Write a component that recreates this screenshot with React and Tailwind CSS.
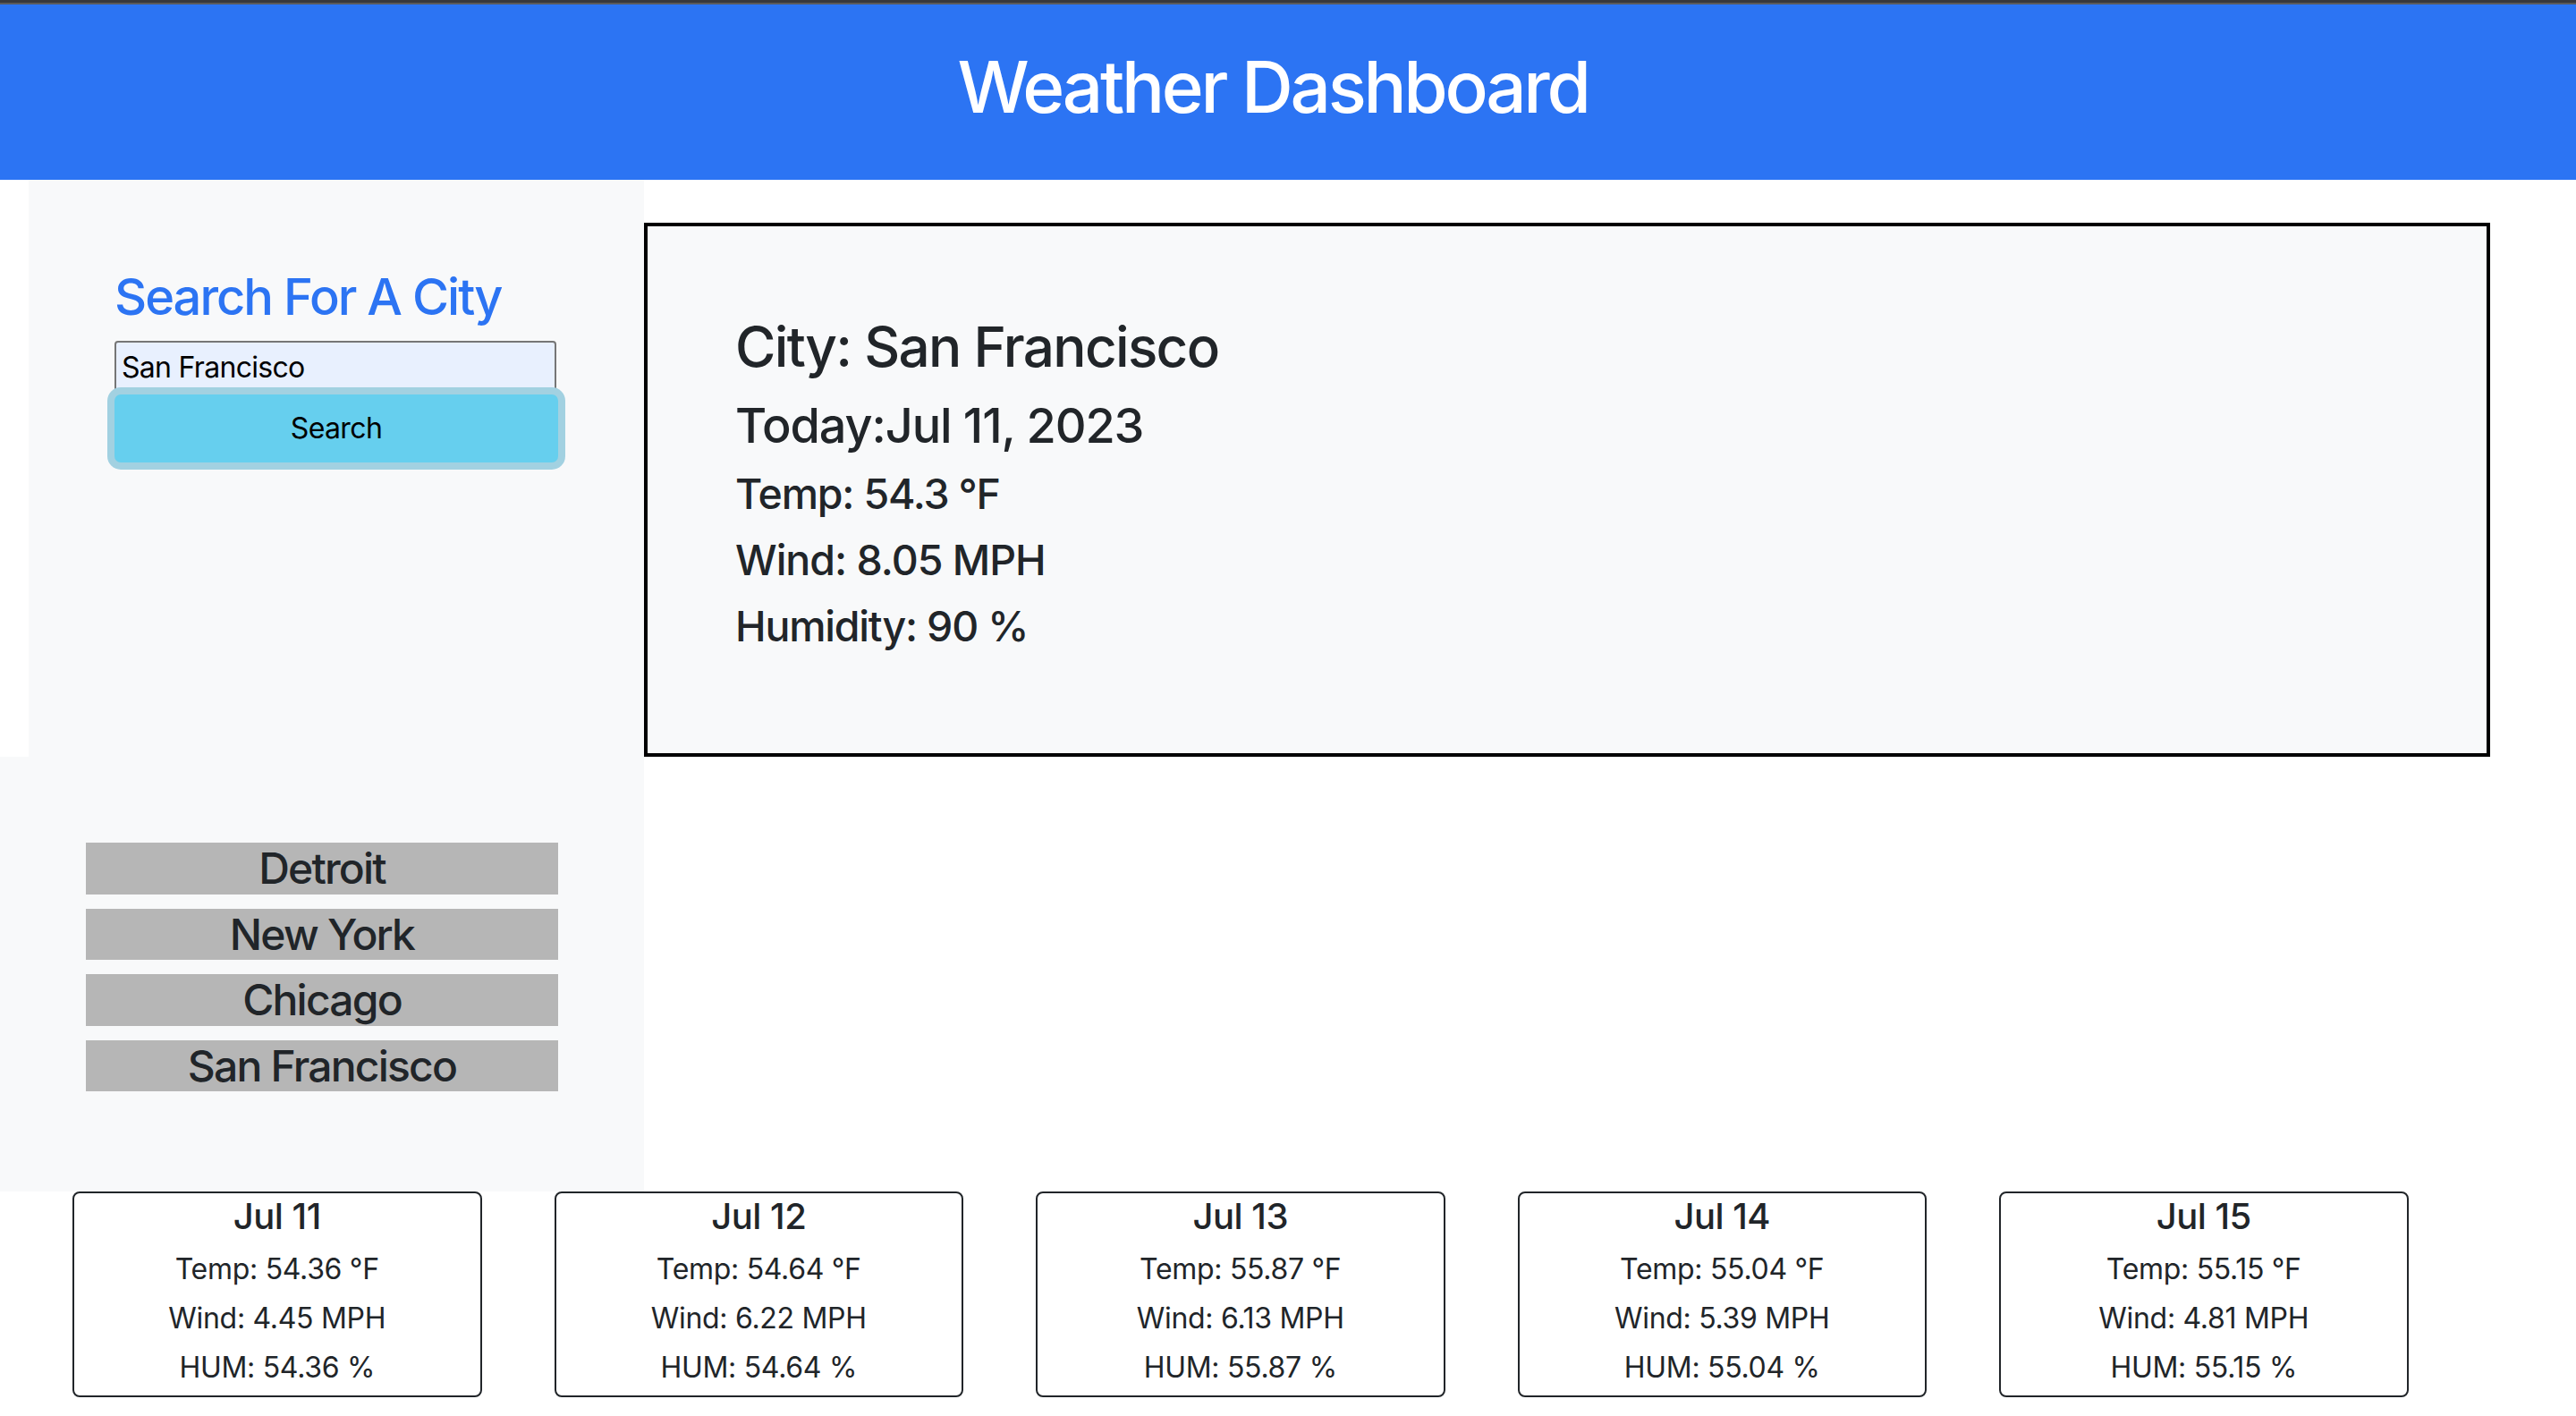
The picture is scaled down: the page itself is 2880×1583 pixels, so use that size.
import React from "react";

const CITIES = ["Detroit", "New York", "Chicago", "San Francisco"];

const FORECAST = [
    { date: "Jul 11", temp: "54.36", wind: "4.45", hum: "54.36" },
    { date: "Jul 12", temp: "54.64", wind: "6.22", hum: "54.64" },
    { date: "Jul 13", temp: "55.87", wind: "6.13", hum: "55.87" },
    { date: "Jul 14", temp: "55.04", wind: "5.39", hum: "55.04" },
    { date: "Jul 15", temp: "55.15", wind: "4.81", hum: "55.15" },
];

function Header() {
    return (
        <header className="h-[201px] flex flex-col">
            <div className="h-[3px] bg-[#38383c]"></div>
            <div className="h-[2px] bg-[#5a5a5c]"></div>
            <div className="flex-1 bg-[#2c74f3] flex items-center justify-center pb-[12px] pr-[34px]">
                <h1 className="text-white text-[80px] leading-[96px] font-medium tracking-[-3.3px]">Weather Dashboard</h1>
            </div>
        </header>
    );
}

function SearchPanel() {
    return (
        <aside className="ml-[32px] w-[688px] shrink-0 bg-[#f8f9fa] px-[96px] pt-[98px]">
            <h3 className="text-[56px] leading-[67px] font-medium text-[#2c74f3] mb-[15px] whitespace-nowrap tracking-[-2px]">Search For A City</h3>
            <input
                defaultValue="San Francisco"
                className="block w-[494px] h-[59px] bg-[#e8f0fe] border-2 border-[#767676] rounded-[4px] px-[6px] text-[32px] text-black outline-none tracking-[-0.7px]"
            />
            <button className="block w-[496px] h-[76px] mt-[1px] bg-[#66cfee] rounded-[7px] text-[32px] text-black tracking-[-0.6px] shadow-[0_0_0_8px_#a2d1e1]">Search</button>
        </aside>
    );
}

function CurrentWeather() {
    return (
        <main className="mt-[48px] w-[2064px] h-[597px] shrink-0 border-4 border-black bg-[#f8f9fa] pl-[98px] pt-[87px] text-[#212529] font-medium">
            <h2 className="text-[62px] leading-[96px] tracking-[-1.7px]">City: San Francisco</h2>
            <h3 className="text-[54px] leading-[79px] tracking-[-1.1px]">Today:Jul 11, 2023</h3>
            <h4 className="text-[46.5px] leading-[74px] tracking-[-1.2px]">Temp: 54.3 °F</h4>
            <h4 className="text-[46.5px] leading-[74px] tracking-[-1px]">Wind: 8.05 MPH</h4>
            <h4 className="text-[46.5px] leading-[74px] tracking-[-1.2px]">Humidity: 90 %</h4>
        </main>
    );
}

function History() {
    return (
        <section className="w-[720px] bg-[#f8f9fa] px-[96px] pt-[96px] pb-[112px] flex flex-col gap-[16px]">
            {CITIES.map(c => (
                <button key={c} className="h-[57.6px] bg-[#b6b6b6] text-[48px] leading-[57.6px] font-medium text-[#212529] tracking-[-1.8px]">{c}</button>
            ))}
        </section>
    );
}

function Forecast() {
    return (
        <div className="flex pl-[81px] gap-[81px]">
            {FORECAST.map(f => (
                <div key={f.date} className="w-[457.5px] h-[230px] shrink-0 border-2 border-[#212529] rounded-[8px] pt-[2px] flex flex-col items-center text-[#212529]">
                    <h5 className="text-[40px] leading-[48px] font-medium mb-[7px] tracking-[-0.5px]">{f.date}</h5>
                    <p className="text-[32px] leading-[55px] tracking-[-0.3px]">Temp: {f.temp} °F</p>
                    <p className="text-[32px] leading-[55px] tracking-[-0.3px]">Wind: {f.wind} MPH</p>
                    <p className="text-[32px] leading-[55px] tracking-[-0.3px]">HUM: {f.hum} %</p>
                </div>
            ))}
        </div>
    );
}

export default function App() {
    return (
        <div className="min-h-[1583px] bg-white font-['Inter',sans-serif]">
            <Header />
            <div className="flex">
                <SearchPanel />
                <CurrentWeather />
            </div>
            <History />
            <Forecast />
        </div>
    );
}
